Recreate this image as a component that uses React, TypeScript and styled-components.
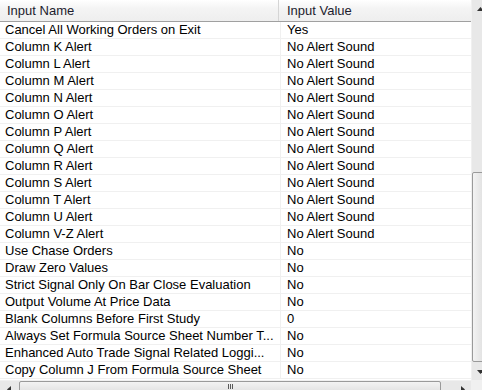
import React from 'react'
import styled, { createGlobalStyle } from 'styled-components'

const GlobalStyle = createGlobalStyle`
  html, body {
    margin: 0;
    padding: 0;
    background: #ffffff;
  }
  body {
    font-family: "Liberation Sans", Arial, sans-serif;
    font-size: 13px;
  }
`

interface Input {
  name: string
  value: string
}

const inputs: Input[] = [
  { name: 'Cancel All Working Orders on Exit', value: 'Yes' },
  { name: 'Column K Alert', value: 'No Alert Sound' },
  { name: 'Column L Alert', value: 'No Alert Sound' },
  { name: 'Column M Alert', value: 'No Alert Sound' },
  { name: 'Column N Alert', value: 'No Alert Sound' },
  { name: 'Column O Alert', value: 'No Alert Sound' },
  { name: 'Column P Alert', value: 'No Alert Sound' },
  { name: 'Column Q Alert', value: 'No Alert Sound' },
  { name: 'Column R Alert', value: 'No Alert Sound' },
  { name: 'Column S Alert', value: 'No Alert Sound' },
  { name: 'Column T Alert', value: 'No Alert Sound' },
  { name: 'Column U Alert', value: 'No Alert Sound' },
  { name: 'Column V-Z Alert', value: 'No Alert Sound' },
  { name: 'Use Chase Orders', value: 'No' },
  { name: 'Draw Zero Values', value: 'No' },
  { name: 'Strict Signal Only On Bar Close Evaluation', value: 'No' },
  { name: 'Output Volume At Price Data', value: 'No' },
  { name: 'Blank Columns Before First Study', value: '0' },
  { name: 'Always Set Formula Source Sheet Number T...', value: 'No' },
  { name: 'Enhanced Auto Trade Signal Related Loggi...', value: 'No' },
  { name: 'Copy Column J From Formula Source Sheet', value: 'No' },
]

// the window is wider/taller than the capture, so the scrollbars are clipped
const Frame = styled.div`
  width: 482px;
  height: 390px;
  overflow: hidden;
`
const ListView = styled.div`
  width: 488px;
  height: 397px;
  display: grid;
  grid-template-columns: 471px 17px;
  grid-template-rows: 380px 17px;
`
const Body = styled.div`
  overflow: hidden;
  display: flex;
  flex-direction: column;
`
const HeaderRow = styled.div`
  display: grid;
  grid-template-columns: 279px 1fr;
  height: 21px;
  border-bottom: 1px solid #a0a0a0;
  background: linear-gradient(#ffffff 0%, #f4f4f4 40%, #eeeeee 100%);
`
const HeaderCell = styled.div<{ $divider?: boolean }>`
  display: flex;
  align-items: center;
  padding-left: ${(p) => (p.$divider ? 7 : 8)}px;
  color: #1c1c2e;
  border-right: ${(p) => (p.$divider ? '1px solid #d5d5d5' : 'none')};
  white-space: nowrap;
`
const Row = styled.div`
  display: grid;
  grid-template-columns: 281px 1fr;
  height: 16px;
  border-bottom: 1px solid #f0f0f0;
`
const Cell = styled.div<{ $first?: boolean }>`
  display: flex;
  align-items: center;
  padding-left: ${(p) => (p.$first ? 5 : 6)}px;
  color: #000000;
  white-space: nowrap;
  overflow: hidden;
  border-right: ${(p) => (p.$first ? '1px solid #f0f0f0' : 'none')};
  line-height: 16px;
`
const VScroll = styled.div`
  display: flex;
  flex-direction: column;
  background: #e8e8e8;
  border-left: 1px solid #f0f0f0;
`
const HScroll = styled.div`
  display: flex;
  background: #e8e8e8;
  border-top: 1px solid #f0f0f0;
`
const ArrowBox = styled.div`
  width: 17px;
  height: 17px;
  flex: none;
  display: flex;
  align-items: center;
  justify-content: center;
`
const Track = styled.div<{ $vertical?: boolean }>`
  flex: 1;
  display: flex;
  flex-direction: ${(p) => (p.$vertical ? 'column' : 'row')};
  padding: ${(p) => (p.$vertical ? '155px 0 0 0' : '0 0 0 2px')};
`
const Thumb = styled.div<{ $vertical?: boolean }>`
  border: 1px solid #9a9a9a;
  border-radius: 2px;
  background: ${(p) =>
    p.$vertical
      ? 'linear-gradient(90deg, #f3f3f3, #e4e4e4 60%, #d9d9d9)'
      : 'linear-gradient(#f3f3f3, #e4e4e4 60%, #d9d9d9)'};
  box-sizing: border-box;
  width: ${(p) => (p.$vertical ? '100%' : '422px')};
  height: ${(p) => (p.$vertical ? '190px' : '100%')};
  display: flex;
  align-items: center;
  justify-content: center;
`
const Corner = styled.div`
  background: #f0f0f0;
`
const Grip = styled.div`
  display: flex;
  gap: 1px;
  margin-top: -6px;
  span {
    width: 1px;
    height: 5px;
    background: #5a5a5a;
  }
`

const Arrow = ({ dir }: { dir: 'up' | 'down' | 'left' | 'right' }) => {
  const pts = {
    up: '0,4 3.5,0 7,4',
    down: '0,0 3.5,4 7,0',
    left: '4,0 0,3.5 4,7',
    right: '0,0 4,3.5 0,7',
  }[dir]
  const vertical = dir === 'up' || dir === 'down'
  return (
    <svg width={vertical ? 7 : 4} height={vertical ? 4 : 7} viewBox={vertical ? '0 0 7 4' : '0 0 4 7'}>
      <polygon points={pts} fill="#333" />
    </svg>
  )
}

export default function App() {
  return (
    <>
      <GlobalStyle />
      <Frame>
        <ListView>
          <Body>
            <HeaderRow>
              <HeaderCell $divider>Input Name</HeaderCell>
              <HeaderCell>Input Value</HeaderCell>
            </HeaderRow>
            {inputs.map((input) => (
              <Row key={input.name}>
                <Cell $first>{input.name}</Cell>
                <Cell>{input.value}</Cell>
              </Row>
            ))}
          </Body>
          <VScroll>
            <ArrowBox>
              <Arrow dir="up" />
            </ArrowBox>
            <Track $vertical>
              <Thumb $vertical />
            </Track>
            <ArrowBox>
              <Arrow dir="down" />
            </ArrowBox>
          </VScroll>
          <HScroll>
            <ArrowBox>
              <Arrow dir="left" />
            </ArrowBox>
            <Track>
              <Thumb>
                <Grip>
                  <span />
                  <span />
                  <span />
                </Grip>
              </Thumb>
            </Track>
            <ArrowBox>
              <Arrow dir="right" />
            </ArrowBox>
          </HScroll>
          <Corner />
        </ListView>
      </Frame>
    </>
  )
}
